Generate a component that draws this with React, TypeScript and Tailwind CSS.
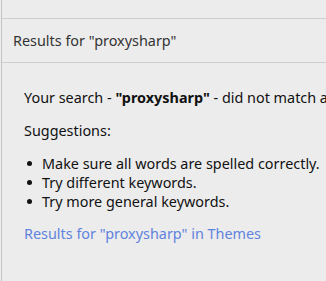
export default function App() {
  const tips = [
    'Make sure all words are spelled correctly.',
    'Try different keywords.',
    'Try more general keywords.',
  ]

  return (
    <div className="h-[281px] w-[326px] overflow-hidden bg-[#ececec] font-['Noto_Sans',sans-serif]">
      <div className="ml-[1px] h-full border-l border-[#c4c4c4] pt-[18px]">
        <div className="border-t border-[#cfcfcf]">
          <div className="flex h-[43px] items-center px-[11px] text-[14.4px] text-[#333]">
            Results for "proxysharp"
          </div>
        </div>
        <div className="whitespace-nowrap border-t border-[#cfcfcf] px-[22px] pt-[25px] text-[14.4px] leading-[19px] text-[#111]">
          <p>
            Your search - <b>"proxysharp"</b> - did not match any documents.
          </p>
          <p className="mt-[14px]">Suggestions:</p>
          <ul className="mt-[14px]">
            {tips.map((t) => (
              <li key={t} className="flex items-center">
                <span className="ml-[3px] mr-[10px] h-[5px] w-[5px] shrink-0 rounded-full bg-[#111]" />
                {t}
              </li>
            ))}
          </ul>
          <a className="mt-[13px] block text-[#6183de]" href="#">
            Results for "proxysharp" in Themes
          </a>
        </div>
      </div>
    </div>
  )
}
